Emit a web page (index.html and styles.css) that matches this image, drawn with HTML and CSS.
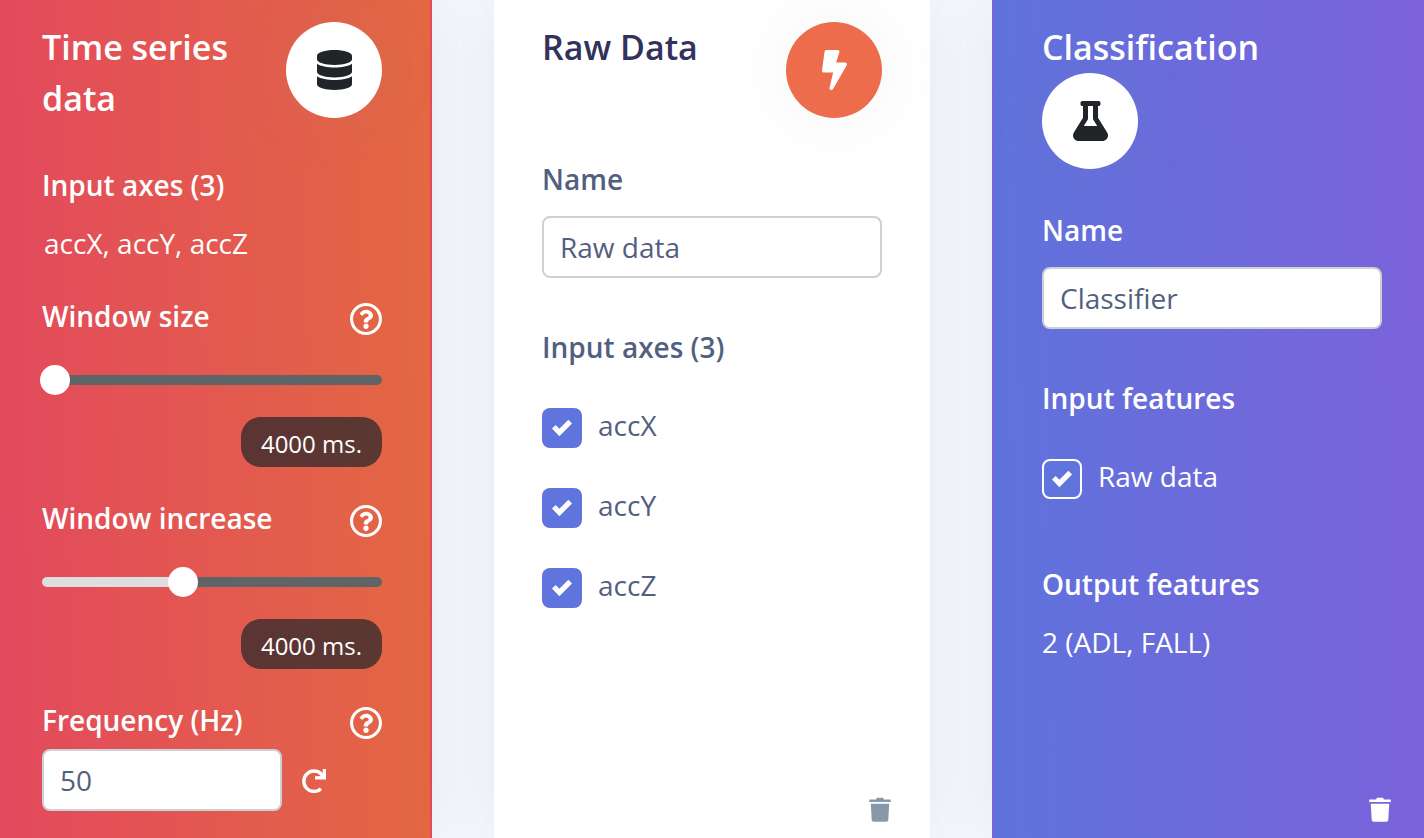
FILE: index.html
```html
<!DOCTYPE html>
<html lang="en">
<head>
<meta charset="utf-8">
<meta name="viewport" content="width=device-width, initial-scale=1">
<title>Impulse design</title>
<link rel="stylesheet" href="styles.css">
</head>
<body>
<svg class="symbols" aria-hidden="true">
  <symbol id="help" viewBox="8 8 496 496"><path d="M256 8C119.043 8 8 119.083 8 256c0 136.997 111.043 248 248 248s248-111.003 248-248C504 119.083 392.957 8 256 8zm0 448c-110.532 0-200-89.431-200-200 0-110.495 89.472-200 200-200 110.491 0 200 89.471 200 200 0 110.53-89.431 200-200 200zm107.244-255.2c0 67.052-72.421 68.084-72.421 92.863V300c0 6.627-5.373 12-12 12h-45.647c-6.627 0-12-5.373-12-12v-8.659c0-35.745 27.1-50.034 47.579-61.516 17.561-9.845 28.324-16.541 28.324-29.579 0-17.246-21.999-28.693-39.784-28.693-23.189 0-33.894 10.977-48.942 29.969-4.057 5.12-11.46 6.071-16.666 2.124l-27.824-21.098c-5.107-3.872-6.251-11.066-2.644-16.363C184.846 131.491 214.94 112 261.794 112c49.071 0 101.45 38.304 101.45 88.8zM298 368c0 23.159-18.841 42-42 42s-42-18.841-42-42 18.841-42 42-42 42 18.841 42 42z"/></symbol>
  <symbol id="trash" viewBox="0 0 22 26"><path d="M1 2.500h6L8 .8h6l1 1.700h6q.8 0 .8.800v1.700H.2V3.300q0-.8.800-.8zM1.800 6.700h18.400l-.9 16.300q-.2 1.800-2 1.800H4.700q-1.800 0-2-1.800z"/></symbol>
</svg>
<main class="board">
  <section class="card card-series">
    <div class="body">
      <header class="head">
        <h2 class="title">Time series data</h2>
        <span class="badge"><svg class="glyph" viewBox="0 0 448 512" aria-hidden="true"><path d="M448 73.143v45.714C448 159.143 347.667 192 224 192S0 159.143 0 118.857V73.143C0 32.857 100.333 0 224 0s224 32.857 224 73.143zM448 176v102.857C448 319.143 347.667 352 224 352S0 319.143 0 278.857V176c48.125 33.143 136.208 48.572 224 48.572S399.874 209.143 448 176zm0 160v102.857C448 479.143 347.667 512 224 512S0 479.143 0 438.857V336c48.125 33.143 136.208 48.572 224 48.572S399.874 369.143 448 336z"/></svg></span>
      </header>
      <h3 class="label">Input axes (3)</h3>
      <p class="value axes">accX, accY, accZ</p>

      <div class="setting">
        <div class="row">
          <label class="label" for="window-size">Window size</label>
          <button class="help" type="button" aria-label="About window size"><svg aria-hidden="true"><use href="#help"/></svg></button>
        </div>
        <input class="slider" id="window-size" type="range" min="0" max="1000" value="0" style="--fill: 0%">
        <output class="pill" for="window-size">4000 ms.</output>
      </div>

      <div class="setting">
        <div class="row">
          <label class="label" for="window-increase">Window increase</label>
          <button class="help" type="button" aria-label="About window increase"><svg aria-hidden="true"><use href="#help"/></svg></button>
        </div>
        <input class="slider" id="window-increase" type="range" min="0" max="1000" value="412" style="--fill: 41%">
        <output class="pill" for="window-increase">4000 ms.</output>
      </div>

      <div class="setting">
        <div class="row">
          <label class="label" for="frequency">Frequency (Hz)</label>
          <button class="help" type="button" aria-label="About frequency"><svg aria-hidden="true"><use href="#help"/></svg></button>
        </div>
        <div class="frequency">
          <input class="field" id="frequency" type="text" inputmode="numeric" value="50">
          <button class="redo" type="button" aria-label="Reset frequency"><svg viewBox="0 0 24 24" aria-hidden="true"><path class="redo-arc" d="M19 19.700A10.200 10.200 0 1 1 19.200 5L21 7.500"/><path d="M20.700 0H24v10.600H13V7.200l7.700-.2z"/></svg></button>
        </div>
      </div>
    </div>
  </section>

  <section class="card card-raw">
    <div class="body">
      <header class="head">
        <h2 class="title">Raw Data</h2>
        <span class="badge badge-orange"><svg class="glyph" viewBox="0 0 320 512" aria-hidden="true"><path d="M296 160H180.600l42.600-129.800C227.200 15 215.700 0 200 0H56C44 0 33.800 8.900 32.200 20.800l-32 240C-1.700 275.200 9.500 288 24 288h118.700L96.600 482.500c-3.600 15.200 8 29.500 23.300 29.500 8.400 0 16.400-4.400 20.800-12l176-304c9.300-15.900-2.200-36-20.700-36z"/></svg></span>
      </header>
      <label class="label" for="raw-name">Name</label>
      <input class="field named" id="raw-name" type="text" value="Raw data">
      <h3 class="label spaced">Input axes (3)</h3>
      <div class="checks">
        <label class="check"><input type="checkbox" checked><span>accX</span></label>
        <label class="check"><input type="checkbox" checked><span>accY</span></label>
        <label class="check"><input type="checkbox" checked><span>accZ</span></label>
      </div>
    </div>
    <footer class="foot"><button class="delete" type="button" aria-label="Delete raw data block"><svg aria-hidden="true"><use href="#trash"/></svg></button></footer>
  </section>

  <section class="card card-class">
    <div class="body">
      <header class="head head-stacked">
        <h2 class="title">Classification</h2>
        <span class="badge"><svg class="glyph" viewBox="0 0 448 512" aria-hidden="true"><path d="M437.200 403.500L320 215V64h8c13.300 0 24-10.700 24-24V24c0-13.300-10.700-24-24-24H120c-13.300 0-24 10.700-24 24v16c0 13.300 10.700 24 24 24h8v151L10.800 403.500C-18.500 450.600 15.300 512 70.900 512h306.200c55.700 0 89.400-61.500 60.100-108.500zM137.900 320l48.200-77.600c3.700-5.200 5.800-11.600 5.800-18.400V64h64v160c0 6.900 2.200 13.200 5.800 18.400l48.200 77.600h-172z"/></svg></span>
      </header>
      <label class="label" for="class-name">Name</label>
      <input class="field named" id="class-name" type="text" value="Classifier">
      <h3 class="label spaced">Input features</h3>
      <div class="checks">
        <label class="check"><input type="checkbox" checked><span>Raw data</span></label>
      </div>
      <h3 class="label outputs">Output features</h3>
      <p class="value">2 (ADL, FALL)</p>
    </div>
    <footer class="foot"><button class="delete" type="button" aria-label="Delete classification block"><svg aria-hidden="true"><use href="#trash"/></svg></button></footer>
  </section>
</main>
</body>
</html>
```
FILE: styles.css
```css
* {
  box-sizing: border-box;
}

body {
  margin: 0;
  background: #f7f8fd;
  color: #525f7f;
  font: 400 28px/40px "Open Sans", "Noto Sans", sans-serif;
}

h2, h3, p {
  margin: 0;
}

button {
  display: flex;
  padding: 0;
  border: 0;
  background: none;
  color: inherit;
  cursor: pointer;
}

svg {
  display: block;
  fill: currentColor;
}

.symbols {
  position: absolute;
  width: 0;
  height: 0;
}

.board {
  display: grid;
  grid-template-columns: 432fr 436fr 432fr;
  gap: 62px;
  min-height: 100vh;
}

.card {
  display: flex;
  flex-direction: column;
  justify-content: space-between;
  min-width: 0;
  box-shadow: 0 0 64px rgba(136, 152, 170, .15);
}

.card-series {
  border-right: 2px solid transparent;
  background-image: linear-gradient(89deg, #e3495d, #e36842);
  color: #fff;
}

.card-raw {
  background: #fff;
}

.card-class {
  border-left: 2px solid transparent;
  background-image: linear-gradient(89deg, #5e73dc, #7c62da);
  color: #fff;
}

.body {
  display: flex;
  flex-direction: column;
  padding: 22px 48px 24px;
}

.card-series .body {
  padding-left: 42px;
}

.card-class .body {
  padding-right: 42px;
}

.head {
  display: flex;
  align-items: flex-start;
  justify-content: space-between;
  margin-bottom: 41px;
}

.head-stacked {
  flex-direction: column;
}

.title {
  font-size: 34px;
  font-weight: 600;
  line-height: 51px;
}

.card-raw .title {
  color: #32325d;
}

.badge {
  display: grid;
  flex: none;
  place-items: center;
  width: 96px;
  height: 96px;
  border-radius: 50%;
  background: #fff;
  color: #212529;
  box-shadow: 0 0 64px rgba(136, 152, 170, .1);
}

.badge-orange {
  background: #ec6c4b;
  color: #fff;
}

.glyph {
  height: 40px;
}

.label {
  font-size: 28px;
  font-weight: 600;
}

.value {
  margin-top: 18px;
}

.axes {
  padding: 0 0 2px 2px;
}

.setting {
  display: flex;
  flex-direction: column;
  margin-top: 31px;
}

.row {
  display: flex;
  align-items: center;
  justify-content: space-between;
}

.help {
  padding-top: 6px;
}

.help svg {
  width: 32px;
  height: 32px;
}

.slider {
  width: 100%;
  height: 30px;
  margin: 29px 0 22px;
  appearance: none;
  background: none;
}

.slider::-webkit-slider-runnable-track {
  height: 10px;
  border-radius: 5px;
  background: linear-gradient(90deg, #dedede var(--fill), #5f6466 var(--fill));
}

.slider::-webkit-slider-thumb {
  width: 30px;
  height: 30px;
  margin-top: -10px;
  margin-left: -2px;
  appearance: none;
  border-radius: 50%;
  background: #fff;
}

.pill {
  align-self: flex-end;
  padding: 4px 20px 0;
  border-radius: 20px;
  background: rgba(33, 37, 41, .7);
  font-size: 24px;
  line-height: 46px;
}

.field {
  width: 100%;
  min-width: 0;
  height: 62px;
  padding: 0 16px;
  border: 2px solid #cad1d7;
  border-radius: 8px;
  background: #fff;
  color: #525f7f;
  font: inherit;
}

.named {
  margin-top: 17px;
}

.spaced {
  margin-top: 49px;
}

.frequency {
  display: grid;
  grid-template-columns: 12fr 5fr;
  align-items: center;
  margin-top: 9px;
}

.redo {
  padding-top: 2px;
  margin-left: 20px;
}

.redo svg {
  width: 24px;
  height: 24px;
}

.redo-arc {
  fill: none;
  stroke: currentColor;
  stroke-width: 3.4;
}

.checks {
  display: grid;
  gap: 40px;
  margin-top: 41px;
}

.check {
  display: flex;
  gap: 16px;
  height: 40px;
}

.check span {
  line-height: 34px;
}

.check input {
  display: grid;
  place-items: center;
  width: 40px;
  height: 40px;
  margin: 0;
  appearance: none;
  border-radius: 8px;
}

.check input:checked {
  background: #5f74dd;
}

.card-class .check input {
  border: 2px solid #fff;
}

.check input:checked::before {
  width: 20px;
  height: 20px;
  background: #fff;
  clip-path: polygon(82% 9%, 37% 54%, 18% 35%, 0 53%, 37% 91%, 100% 27%);
  content: "";
}

.outputs {
  margin-top: 65px;
}

.foot {
  display: flex;
  justify-content: flex-end;
  padding: 0 39px 15px;
  color: #8898aa;
}

.card-class .foot {
  padding-right: 33px;
  color: #fff;
}

.delete svg {
  width: 22px;
  height: 26px;
}
```
